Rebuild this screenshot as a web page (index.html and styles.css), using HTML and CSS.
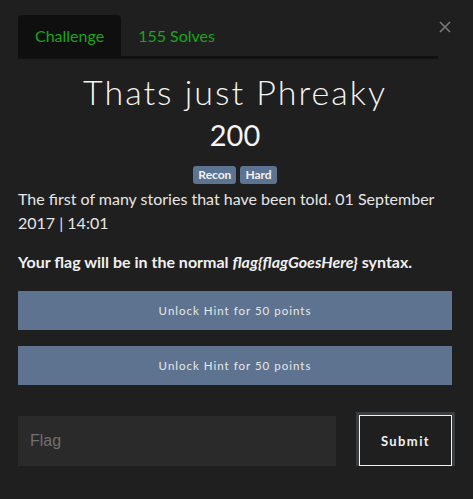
FILE: index.html
```html
<!DOCTYPE html>
<html>
<head>
<meta charset="utf-8">
<link rel="stylesheet" href="styles.css">
</head>
<body>
<div class="modal">
  <button class="close" aria-label="Close">
    <svg width="12" height="12" viewBox="0 0 12 12"><path d="M1 1L11 11M11 1L1 11" stroke="#7a7a7a" stroke-width="1.6"/></svg>
  </button>
  <div class="tabs">
    <div class="tab active">Challenge</div>
    <div class="tab">155 Solves</div>
  </div>
  <h1 class="title">Thats just Phreaky</h1>
  <div class="value">200</div>
  <div class="tags">
    <span class="tag">Recon</span>
    <span class="tag">Hard</span>
  </div>
  <p class="desc">The first of many stories that have been told. 01 September 2017 | 14:01</p>
  <p class="note">Your flag will be in the normal <em>flag{flagGoesHere}</em> syntax.</p>
  <button class="hint">Unlock Hint for 50 points</button>
  <button class="hint">Unlock Hint for 50 points</button>
  <div class="submit-row">
    <input class="flag" type="text" placeholder="Flag">
    <button class="submit">Submit</button>
  </div>
</div>
</body>
</html>
```

FILE: styles.css
```css
html, body {
  margin: 0;
  padding: 0;
  background: #1f1f1f;
}
body {
  font-family: Lato, "Open Sans", sans-serif;
  color: #ececec;
}
.modal {
  position: relative;
  padding: 15px 21px 0 18px;
}
.close {
  position: absolute;
  top: 21px;
  left: 439px;
  padding: 0;
  border: 0;
  background: none;
  width: 12px;
  height: 12px;
}
.close svg { display: block; }
.tabs {
  display: flex;
  width: 420px;
  border-bottom: 3px solid #111;
}
.tab {
  height: 41px;
  line-height: 41px;
  padding: 0 17px;
  font-size: 16px;
  color: #1aa51a;
  border-radius: 4px 4px 0 0;
}
.tab.active {
  background: #0f0f0f;
}
.title {
  margin: 13px 0 0;
  text-align: center;
  font-weight: 300;
  font-size: 34px;
  letter-spacing: 2px;
  line-height: 40px;
  color: #f4f4f4;
}
.value {
  margin-top: 5px;
  text-align: center;
  font-size: 29px;
  font-weight: 400;
  line-height: 36px;
  color: #f4f4f4;
}
.tags {
  display: flex;
  justify-content: center;
  gap: 4px;
  margin-top: 13px;
}
.tag {
  background: #5c7391;
  color: #f2f2f2;
  font-weight: 700;
  font-size: 12px;
  line-height: 18px;
  padding: 0 5px;
  border-radius: 3px;
}
.desc {
  margin: 3px 0 0;
  font-size: 16px;
  line-height: 24px;
  color: #e6e6e6;
}
.note {
  margin: 15px 0 0;
  font-size: 16px;
  font-weight: 700;
  line-height: 24px;
  color: #f0f0f0;
}
.note em { font-style: italic; }
.hint {
  display: block;
  width: 434px;
  height: 39px;
  border: 0;
  background: #5d7390;
  color: #e8e8e8;
  font-family: Lato, sans-serif;
  font-size: 11.5px;
  letter-spacing: 1px;
  margin-top: 16px;
  padding: 0;
}
.note + .hint { margin-top: 17px; }
.submit-row {
  display: flex;
  align-items: center;
  margin-top: 30px;
}
.flag {
  width: 318px;
  height: 50px;
  box-sizing: border-box;
  border: 0;
  background: #2a2a2a;
  padding: 0 12px;
  font-family: "Liberation Sans", Arial, sans-serif;
  font-size: 16px;
  color: #ddd;
  outline: none;
}
.flag::placeholder { color: #707070; }
.submit {
  margin-left: 23px;
  width: 93px;
  height: 51px;
  box-sizing: border-box;
  border: 1px solid #f2f2f2;
  box-shadow: 0 0 0 3px #3b3e41;
  background: #1f1f1f;
  color: #f0f0f0;
  font-family: Lato, sans-serif;
  font-weight: 700;
  font-size: 13px;
  letter-spacing: 1.4px;
  padding: 0;
}
```
